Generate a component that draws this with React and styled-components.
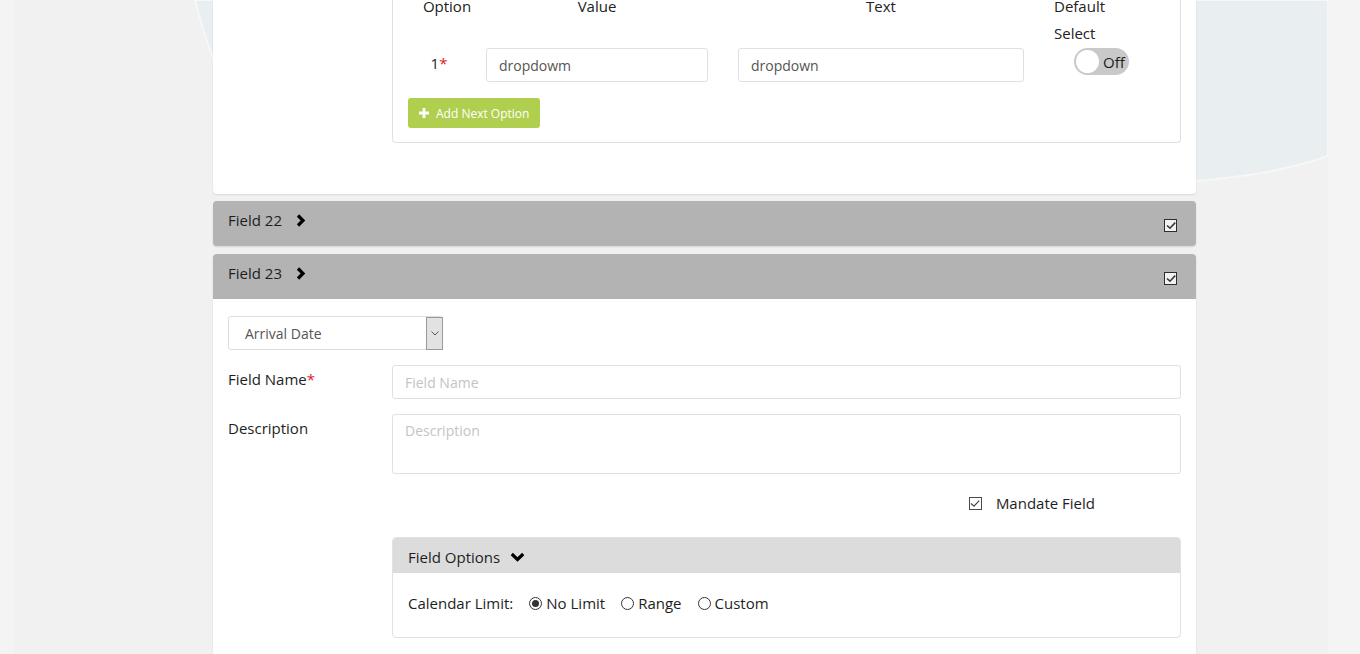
import React from "react";
import styled, { createGlobalStyle } from "styled-components";

const Global = createGlobalStyle`
  html, body { margin: 0; padding: 0; }
  body {
    font-family: "Open Sans", "Noto Sans", sans-serif;
    color: #222;
    background: #f4f4f4;
    overflow: hidden;
  }
  * { box-sizing: border-box; }
`;

const Page = styled.div`
  display: flex;
  min-height: 654px;
  background: #f4f4f4;
`;

const Gutter = styled.div`
  flex: 0 0 ${(p) => p.$w}px;
  background: #f4f4f4;
`;

const Main = styled.main`
  flex: 1;
  position: relative;
  overflow: hidden;
  background: #f1f1f1;
  padding-left: 199px;
`;

const Backdrop = styled.svg`
  position: absolute;
  left: 0;
  top: 0;
  width: 1314px;
  height: 260px;
  pointer-events: none;
`;

const Column = styled.div`
  position: relative;
  width: 983px;
  display: flex;
  flex-direction: column;
`;

const TopCard = styled.section`
  margin-top: -7px;
  background: #fff;
  border-radius: 0 0 4px 4px;
  box-shadow: 0 1px 2px rgba(0, 0, 0, 0.1);
  padding: 0 15px 51px 179px;
`;

const OptionsBox = styled.div`
  border: 1px solid #e0e0e0;
  border-top: none;
  border-radius: 0 0 4px 4px;
  padding: 0 0 14px 15px;
`;

const GridRow = styled.div`
  display: flex;
  align-items: flex-start;
  margin-top: ${(p) => p.$mt || 0}px;
`;

const HeadCell = styled.div`
  width: ${(p) => p.$w}px;
  margin-left: ${(p) => p.$ml || 0}px;
  text-align: ${(p) => p.$align || "center"};
  font-size: 15px;
  line-height: 27px;
  color: #222;
`;

const RowLabel = styled.div`
  width: 78px;
  padding: 4px 16px 0 0;
  text-align: center;
  font-size: 15px;
  line-height: 22px;
  color: #222;
`;

const Req = styled.span`
  color: #e4161d;
`;

const Input = styled.input`
  display: block;
  width: ${(p) => (p.$w ? `${p.$w}px` : "100%")};
  flex: ${(p) => (p.$grow ? 1 : "0 0 auto")};
  margin-left: ${(p) => p.$ml || 0}px;
  height: 34px;
  border: 1px solid #e0e0e0;
  border-radius: 3px;
  padding: 0 12px;
  font-family: inherit;
  font-size: 14px;
  color: #555;
  background: #fff;
  outline: none;
  &::placeholder { color: #c4c4c4; }
`;

const TextArea = styled.textarea`
  display: block;
  flex: 1;
  height: 60px;
  border: 1px solid #e0e0e0;
  border-radius: 3px;
  padding: 6px 12px;
  font-family: inherit;
  font-size: 14px;
  line-height: 20px;
  color: #555;
  resize: none;
  outline: none;
  &::placeholder { color: #c4c4c4; }
`;

const SwitchCell = styled.div`
  margin-left: 50px;
`;

const Switch = styled.div`
  width: 55px;
  height: 27px;
  border-radius: 14px;
  background: #c9c9c9;
  display: flex;
  align-items: center;
  padding: 0 5px 0 2px;
  gap: 4px;
  font-size: 15px;
  color: #1c1c1c;
`;

const Knob = styled.span`
  width: 23px;
  height: 23px;
  border-radius: 50%;
  background: #fff;
  flex: 0 0 auto;
`;

const AddButton = styled.button`
  margin-top: 16px;
  height: 30px;
  display: inline-flex;
  align-items: center;
  gap: 7px;
  padding: 0 11px;
  border: none;
  border-radius: 3px;
  background: #b0cf4e;
  color: #fff;
  font-family: inherit;
  font-size: 12px;
`;

const FieldHeader = styled.div`
  margin-top: ${(p) => p.$mt}px;
  height: 45px;
  background: #b3b3b3;
  border-radius: ${(p) => (p.$open ? "4px 4px 0 0" : "4px")};
  box-shadow: 0 1px 2px rgba(0, 0, 0, 0.12);
  display: flex;
  align-items: flex-start;
  padding: 8px 19px 0 15px;
`;

const FieldTitle = styled.div`
  display: flex;
  align-items: center;
  gap: 14px;
  font-size: 15px;
  line-height: 22px;
  color: #1e1e1e;
  flex: 1;
`;

const HeadCheck = styled.span`
  width: 13px;
  height: 13px;
  margin-top: 10px;
  border: 1.5px solid #2e2e2e;
  background: #f2f2f2;
  display: flex;
  align-items: center;
  justify-content: center;
`;

const Body = styled.div`
  background: #fff;
  padding: 17px 15px 40px;
  box-shadow: 0 1px 2px rgba(0, 0, 0, 0.1);
`;

const SelectBox = styled.div`
  width: 215px;
  height: 34px;
  border: 1px solid #ddd;
  border-radius: 3px;
  display: flex;
  align-items: stretch;
  font-size: 14px;
  color: #555;
`;

const SelectText = styled.span`
  flex: 1;
  display: flex;
  align-items: center;
  padding-left: 16px;
`;

const SelectArrow = styled.span`
  width: 17px;
  background: #e2e2e2;
  border: 1px solid #9a9a9a;
  margin: 0 -1px -1px 0;
  display: flex;
  align-items: center;
  justify-content: center;
`;

const FormRow = styled.div`
  display: flex;
  align-items: flex-start;
  margin-top: ${(p) => p.$mt || 15}px;
`;

const Label = styled.label`
  width: 164px;
  padding-top: 3px;
  font-size: 15px;
  line-height: 22px;
  color: #1e1e1e;
`;

const MandateRow = styled.div`
  margin-top: 18px;
  display: flex;
  justify-content: flex-end;
  align-items: center;
  gap: 14px;
  padding-right: 86px;
  font-size: 15px;
  line-height: 22px;
  color: #1e1e1e;
`;

const SmallCheck = styled.span`
  width: 13px;
  height: 13px;
  border: 1px solid #4a4a4a;
  background: #fff;
  display: flex;
  align-items: center;
  justify-content: center;
`;

const OptionsPanel = styled.div`
  margin: 23px 0 0 164px;
  border: 1px solid #e2e2e2;
  border-radius: 4px;
  overflow: hidden;
`;

const PanelHead = styled.div`
  height: 35px;
  background: #dcdcdc;
  display: flex;
  align-items: center;
  gap: 10px;
  padding: 2px 15px 0;
  font-size: 15px;
  color: #1e1e1e;
`;

const PanelBody = styled.div`
  padding: 19px 15px 23px;
  display: flex;
  align-items: center;
  font-size: 15px;
  line-height: 22px;
  color: #1e1e1e;
`;

const RadioItem = styled.span`
  display: inline-flex;
  align-items: center;
  gap: 4px;
  margin-left: ${(p) => p.$ml}px;
`;

const RadioDot = styled.span`
  width: 13px;
  height: 13px;
  border-radius: 50%;
  border: 1px solid #333;
  background: #fff;
  display: flex;
  align-items: center;
  justify-content: center;
  &::after {
    content: "";
    width: 7px;
    height: 7px;
    border-radius: 50%;
    background: ${(p) => (p.$on ? "#333" : "transparent")};
  }
`;

const Check = ({ w = 1.6, color = "#3a3a3a" }) => (
  <svg width="10" height="9" viewBox="0 0 10 9">
    <polyline points="1,4.5 4,7.2 9.2,1.6" fill="none" stroke={color} strokeWidth={w} />
  </svg>
);

const ChevronRight = () => (
  <svg width="10" height="13" viewBox="0 0 10 13">
    <polyline points="2,1.5 7,6.5 2,11.5" fill="none" stroke="#000" strokeWidth="3.2" strokeLinejoin="miter" />
  </svg>
);

const ChevronDown = () => (
  <svg width="15" height="10" viewBox="0 0 15 10">
    <polyline points="1.8,2 7.5,7.5 13.2,2" fill="none" stroke="#000" strokeWidth="3.2" strokeLinejoin="miter" />
  </svg>
);

const Plus = () => (
  <svg width="10" height="10" viewBox="0 0 10 10">
    <path d="M3.6,0 H6.4 V3.6 H10 V6.4 H6.4 V10 H3.6 V6.4 H0 V3.6 H3.6 Z" fill="#fff" />
  </svg>
);

const Radio = ({ on, label, ml }) => (
  <RadioItem $ml={ml}>
    <RadioDot $on={on} />
    {label}
  </RadioItem>
);

export default function App() {
  return (
    <>
      <Global />
      <Page>
        <Gutter $w={14} />
        <Main>
          <Backdrop viewBox="0 0 1314 260">
            <path
              d="M181,0 C186,20 192,40 200,60 C400,160 800,188 1100,185 C1200,183 1270,172 1314,156 L1314,0 Z"
              fill="#e9eef0"
              stroke="#f6f7f7"
              strokeWidth="2"
            />
          </Backdrop>
          <Column>
            <TopCard>
              <OptionsBox>
                <GridRow>
                  <HeadCell $w={78}>Option</HeadCell>
                  <HeadCell $w={222}>Value</HeadCell>
                  <HeadCell $w={286} $ml={30}>Text</HeadCell>
                  <HeadCell $w={60} $ml={30} $align="left">Default Select</HeadCell>
                </GridRow>
                <GridRow $mt={1}>
                  <RowLabel>
                    1<Req>*</Req>
                  </RowLabel>
                  <Input $w={222} defaultValue="dropdowm" />
                  <Input $w={286} $ml={30} defaultValue="dropdown" />
                  <SwitchCell>
                    <Switch>
                      <Knob />
                      Off
                    </Switch>
                  </SwitchCell>
                </GridRow>
                <AddButton>
                  <Plus />
                  Add Next Option
                </AddButton>
              </OptionsBox>
            </TopCard>

            <FieldHeader $mt={7}>
              <FieldTitle>
                Field 22 <ChevronRight />
              </FieldTitle>
              <HeadCheck>
                <Check />
              </HeadCheck>
            </FieldHeader>

            <FieldHeader $mt={8} $open>
              <FieldTitle>
                Field 23 <ChevronRight />
              </FieldTitle>
              <HeadCheck>
                <Check />
              </HeadCheck>
            </FieldHeader>
            <Body>
              <SelectBox>
                <SelectText>Arrival Date</SelectText>
                <SelectArrow>
                  <svg width="8" height="5" viewBox="0 0 8 5">
                    <polyline points="0.5,0.5 4,4 7.5,0.5" fill="none" stroke="#555" strokeWidth="1" />
                  </svg>
                </SelectArrow>
              </SelectBox>
              <FormRow>
                <Label>
                  Field Name<Req>*</Req>
                </Label>
                <Input $grow placeholder="Field Name" />
              </FormRow>
              <FormRow>
                <Label>Description</Label>
                <TextArea placeholder="Description" />
              </FormRow>
              <MandateRow>
                <SmallCheck>
                  <Check w={1.2} color="#444" />
                </SmallCheck>
                Mandate Field
              </MandateRow>
              <OptionsPanel>
                <PanelHead>
                  Field Options <ChevronDown />
                </PanelHead>
                <PanelBody>
                  Calendar Limit:
                  <Radio on label="No Limit" ml={16} />
                  <Radio label="Range" ml={16} />
                  <Radio label="Custom" ml={16} />
                </PanelBody>
              </OptionsPanel>
            </Body>
          </Column>
        </Main>
        <Gutter $w={32} />
      </Page>
    </>
  );
}
